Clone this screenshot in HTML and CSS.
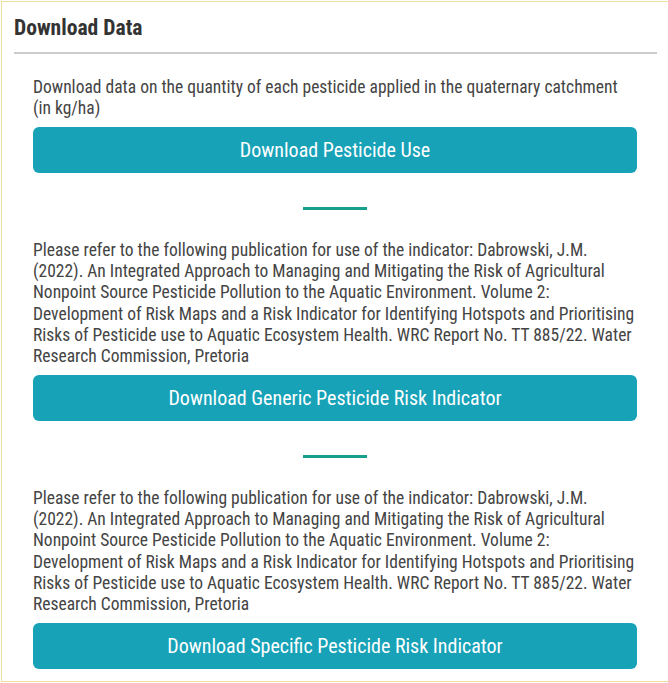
FILE: index.html
```html
<!DOCTYPE html>
<html>
<head>
<meta charset="utf-8">
<link rel="stylesheet" href="styles.css">
</head>
<body>
<div class="panel">
  <div class="panel-header">
    <h2 class="title">Download Data</h2>
  </div>
  <div class="panel-body">
    <section class="block">
      <p class="desc">Download data on the quantity of each pesticide applied in the quaternary catchment (in kg/ha)</p>
      <button class="btn">Download Pesticide Use</button>
    </section>
    <div class="divider"></div>
    <section class="block">
      <p class="desc">Please refer to the following publication for use of the indicator: Dabrowski, J.M. (2022). An Integrated Approach to Managing and Mitigating the Risk of Agricultural Nonpoint Source Pesticide Pollution to the Aquatic Environment. Volume 2: Development of Risk Maps and a Risk Indicator for Identifying Hotspots and Prioritising Risks of Pesticide use to Aquatic Ecosystem Health. WRC Report No. TT 885/22. Water Research Commission, Pretoria</p>
      <button class="btn">Download Generic Pesticide Risk Indicator</button>
    </section>
    <div class="divider"></div>
    <section class="block">
      <p class="desc">Please refer to the following publication for use of the indicator: Dabrowski, J.M. (2022). An Integrated Approach to Managing and Mitigating the Risk of Agricultural Nonpoint Source Pesticide Pollution to the Aquatic Environment. Volume 2: Development of Risk Maps and a Risk Indicator for Identifying Hotspots and Prioritising Risks of Pesticide use to Aquatic Ecosystem Health. WRC Report No. TT 885/22. Water Research Commission, Pretoria</p>
      <button class="btn">Download Specific Pesticide Risk Indicator</button>
    </section>
  </div>
</div>
</body>
</html>
```

FILE: styles.css
```css
html, body {
  margin: 0;
  padding: 0;
  background: #fff;
}
body {
  font-family: "Roboto Condensed", Roboto, "Liberation Sans", sans-serif;
  font-stretch: condensed;
  overflow: hidden;
}
.panel {
  margin: 1px 0 0 1px;
  width: 700px;
  height: 681px;
  box-sizing: border-box;
  border: 1px solid #eedf9f;
  background: #fff;
}
.panel-header {
  padding: 0 0 0 12px;
  width: 643px;
}
.title {
  margin: 0;
  padding: 14px 0 12px 0;
  font-size: 21.6px;
  line-height: 24px;
  font-weight: 700;
  color: #333;
  border-bottom: 2px solid #cccccc;
}
.panel-body {
  width: 604px;
  padding: 23px 0 0 31px;
}
.block {
  display: flex;
  flex-direction: column;
}
.desc {
  margin: 0 0 7px 0;
  font-size: 17.5px;
  line-height: 21.33px;
  color: #444;
}
.btn {
  display: block;
  width: 100%;
  height: 46px;
  border: none;
  border-radius: 6px;
  background: #17a2b8;
  color: #fff;
  font-family: inherit;
  font-stretch: condensed;
  font-size: 20px;
  padding: 0;
  cursor: pointer;
}
.divider {
  width: 64px;
  height: 3px;
  background: #16a08c;
  margin: 34px auto 30px auto;
}
```
